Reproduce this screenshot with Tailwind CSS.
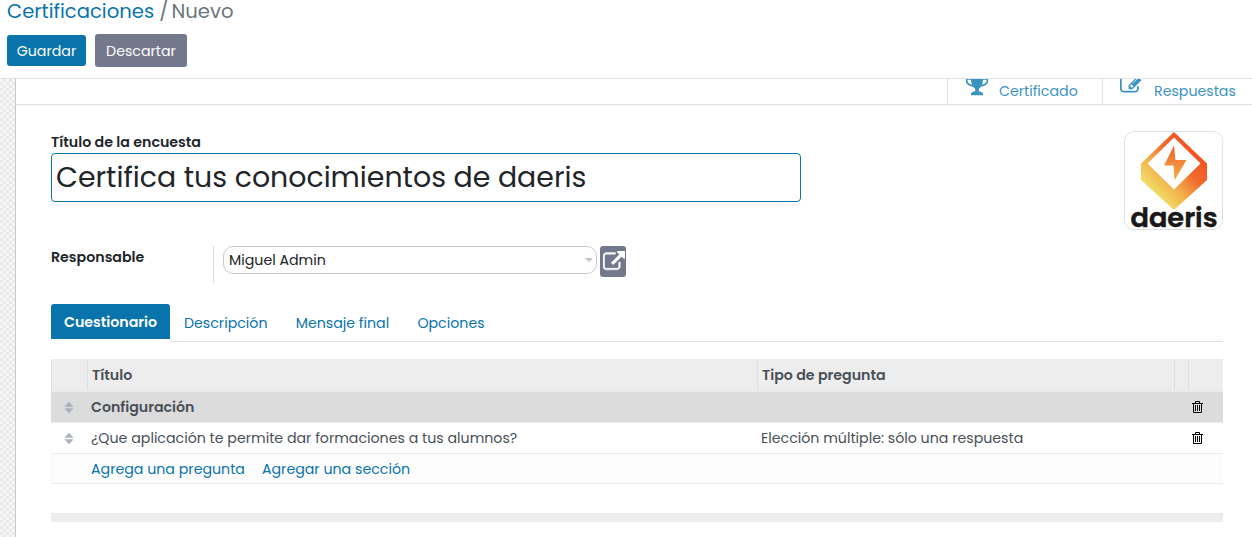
<!DOCTYPE html>
<html lang="es">
<head>
<meta charset="utf-8">
<title>Certificaciones / Nuevo</title>
<script src="https://cdn.jsdelivr.net/npm/@tailwindcss/browser@4"></script>
</head>
<body class="flex h-[537px] w-[1252px] flex-col overflow-hidden bg-white font-[Poppins,Inter,sans-serif] text-[14.2px] leading-[21px] text-[#212529]">

<header class="h-[79px] shrink-0 border-b border-[#dee2e6] pl-[7px]">
  <nav class="flex h-[26px] gap-[5px] text-[19.6px] leading-[22px] text-[#6c757d]">
    <a class="text-[#0874ab]">Certificaciones</a><span>/</span><span class="-ml-[2px]">Nuevo</span>
  </nav>
  <div class="mt-[8px] flex items-center gap-[9px] text-white">
    <button class="h-[31px] w-[79px] rounded-[3px] bg-[#0874ab] pt-[2px]">Guardar</button>
    <button class="h-[33px] w-[92px] rounded-[3px] bg-[#74788d] pt-[2px]">Descartar</button>
  </div>
</header>

<div class="flex min-h-0 flex-1">
  <div class="w-[15px] shrink-0 bg-[repeating-conic-gradient(#e9e9e9_0_25%,#f6f6f6_0_50%)] bg-[length:6px_6px]"></div>

  <main class="flex min-w-0 flex-1 flex-col border-l border-[#c8c8d3]">
    <div class="flex h-[26px] shrink-0 justify-end overflow-hidden border-b border-[#dee2e6] text-[#3b93bf]">
      <div class="flex w-[155px] items-end border-l border-[#dee2e6] pl-[17px]">
        <svg class="mb-[7px] size-6 shrink-0" viewBox="0 0 1792 1792" fill="currentColor"><path d="M522 883q-74-162-74-371h-256v96q0 78 94.5 162t235.5 113zm1078-275v-96h-256q0 209-74 371 141-29 235.5-113t94.5-162zm128-128v128q0 71-41.5 143t-112 130-173 97.5-215.5 44.500q-42 54-95 95-38 34-52.500 72.500t-14.500 89.500q0 54 30.500 91t97.500 37q75 0 133.500 45.500t58.500 114.500v64q0 14-9 23t-23 9h-832q-14 0-23-9t-9-23v-64q0-69 58.500-114.500t133.500-45.500q67 0 97.500-37t30.500-91q0-51-14.500-89.500t-52.500-72.500q-53-41-95-95-113-5-215.500-44.500t-173-97.500-112-130-41.500-143v-128q0-40 28-68t68-28h288v-96q0-66 47-113t113-47h576q66 0 113 47t47 113v96h288q40 0 68 28t28 68z"/></svg>
        <span class="ml-[10px] mb-[2px]">Certificado</span>
      </div>
      <div class="flex w-[150px] items-end border-l border-[#dee2e6] pl-[17px]">
        <svg class="mb-[8px] size-6 shrink-0" viewBox="0 0 1792 1792" fill="currentColor"><path d="M888 1184l116-116-152-152-116 116v56h96v96h56zm440-720q-16-16-33 1l-350 350q-17 17-1 33t33-1l350-350q17-17 1-33zm80 594v190q0 119-84.500 203.500t-203.500 84.500h-832q-119 0-203.500-84.500t-84.500-203.500v-832q0-119 84.500-203.500t203.500-84.500h832q63 0 117 25 15 7 18 23 3 17-9 29l-49 49q-14 14-32 8-23-6-45-6h-832q-66 0-113 47t-47 113v832q0 66 47 113t113 47h832q66 0 113-47t47-113v-126q0-13 9-22l64-64q15-15 35-7t20 29zm-96-738l288 288-672 672h-288v-288zm444 132l-92 92-288-288 92-92q28-28 68-28t68 28l152 152q28 28 28 68t-28 68z"/></svg>
        <span class="ml-[10px] mb-[2px]">Respuestas</span>
      </div>
    </div>

    <div class="flex flex-1 flex-col pl-[35px] pr-[29px] pt-[26px]">
      <div class="flex h-[99px] justify-between">
        <div class="w-[750px]">
          <label class="block h-[22px] leading-[22px] font-semibold">Título de la encuesta</label>
          <div class="h-[49px] rounded-[4px] border border-[#0874ab] pl-[4px] text-[28.4px] leading-[47px]">Certifica tus conocimientos de daeris</div>
        </div>
        <svg class="h-[99px] w-[99px] overflow-visible" viewBox="0 0 99 99">
          <defs>
            <linearGradient id="flame" gradientUnits="userSpaceOnUse" x1="76" y1="22" x2="32" y2="64">
              <stop offset="0" stop-color="#f4511e"/><stop offset="0.35" stop-color="#f06a2c"/><stop offset="0.7" stop-color="#f3b24c"/><stop offset="1" stop-color="#f0dd66"/>
            </linearGradient>
            <linearGradient id="bolt" x1="0.5" y1="0" x2="0.5" y2="1">
              <stop offset="0" stop-color="#f0602a"/><stop offset="1" stop-color="#f2b14a"/>
            </linearGradient>
          </defs>
          <rect x="0.5" y="0.5" width="98" height="98" rx="9.500" fill="#fff" stroke="#dee2e6"/>
          <path d="M50 1L83 32.500V49L50 79L17 49V32.500Z" fill="url(#flame)"/>
          <path d="M50 7.500L75.500 32.500L50 57.500L24.500 32.500Z" fill="#fff" stroke="#fff" stroke-width="1.500" stroke-linejoin="round"/>
          <path d="M50 14.500L40 34.500H49.500L50.500 49.500L62.500 29H51.500Z" fill="url(#bolt)"/>
          <text x="6.500" y="95.500" font-family="Poppins, Inter, sans-serif" font-weight="600" font-size="27" textLength="87" lengthAdjust="spacingAndGlyphs" fill="#181818" stroke="#181818" stroke-width="0.500" stroke-linejoin="round">daeris</text>
        </svg>
      </div>

      <div class="mt-[16px] flex h-[37px]">
        <label class="w-[162px] pt-px font-semibold">Responsable</label>
        <div class="flex border-l border-[#dcdcdc] pl-[9px]">
          <div class="flex h-[28px] w-[374px] items-center justify-between rounded-[10px] border border-[#cbcbcb] pl-[5px] pr-[3px]">
            <span>Miguel Admin</span>
            <svg class="h-[4px] w-[8px]" viewBox="0 0 8 4" fill="#c4c4c4"><path d="M0 0H8L4 4Z"/></svg>
          </div>
          <button class="ml-[3px] flex h-[31px] w-[26px] items-center justify-center rounded-[3px] bg-[#74788d] pl-[2px] text-white">
            <svg class="mt-px size-[22px] shrink-0" viewBox="0 0 1792 1792" fill="currentColor" stroke="currentColor" stroke-width="40"><path d="M1408 928v320q0 119-84.500 203.500t-203.500 84.500h-832q-119 0-203.500-84.500t-84.500-203.500v-832q0-119 84.500-203.500t203.500-84.500h704q14 0 23 9t9 23v64q0 14-9 23t-23 9h-704q-66 0-113 47t-47 113v832q0 66 47 113t113 47h832q66 0 113-47t47-113v-320q0-14 9-23t23-9h64q14 0 23 9t9 23zm384-864v512q0 26-19 45t-45 19-45-19l-176-176-652 652q-10 10-23 10t-23-10l-114-114q-10-10-10-23t10-23l652-652-176-176q-19-19-19-45t19-45 45-19h512q26 0 45 19t19 45z"/></svg>
          </button>
        </div>
      </div>

      <div class="mt-[21px] flex h-[38px] text-[#0874ab]">
        <div class="h-[35px] w-[119px] rounded-t-[3px] bg-[#0874ab] pl-[13px] pt-[8px] font-semibold text-white">Cuestionario</div>
        <div class="flex flex-1 gap-[28.2px] border-b border-[#dee2e6] pl-[14px] pt-[9px]">
          <span>Descripción</span><span>Mensaje final</span><span>Opciones</span>
        </div>
      </div>

      <div class="mt-[17px] text-[#495057]">
        <div class="flex h-[33px] flex-col border-b-2 border-b-[#e9ecef] border-t border-t-[#e9ecef] bg-[#ededed] font-semibold">
          <div class="flex flex-1 leading-[30px]">
            <div class="w-[36px] border-l border-[#dcdee0]"></div>
            <div class="w-[670px] border-l border-[#dcdee0] pl-[4px]">Título</div>
            <div class="w-[417px] border-l border-[#dcdee0] pl-[4px]">Tipo de pregunta</div>
            <div class="w-[14px] border-l border-[#dcdee0]"></div>
            <div class="w-[35px] border-l border-[#dcdee0]"></div>
          </div>
        </div>
        <div class="flex h-[31px] items-center border-b border-[#e9ecef] bg-[#dcdcdc] font-semibold">
          <svg class="ml-[14px] h-[11px] w-[8px] overflow-visible" viewBox="0 0 8 11" fill="#a9b1bd"><path d="M0 4.500L4 0L8 4.500ZM0 6.500H8L4 11Z" stroke="#a9b1bd" stroke-width="0.500"/></svg>
          <span class="ml-[18px] flex-1">Configuración</span>
          <svg class="mr-[20px] h-[12px] w-[11px]" viewBox="0 0 11 12" fill="none" stroke="#000"><path d="M0 2.500H11M3.500 2V0.500H7.500V2M1.500 3V11.500H9.500V3M3.500 4V10M5.500 4V10M7.500 4V10"/></svg>
        </div>
        <div class="flex h-[31px] items-center border-b border-[#e9ecef]">
          <svg class="ml-[14px] h-[11px] w-[8px] overflow-visible" viewBox="0 0 8 11" fill="#a9b1bd"><path d="M0 4.500L4 0L8 4.500ZM0 6.500H8L4 11Z" stroke="#a9b1bd" stroke-width="0.500"/></svg>
          <span class="ml-[18px] w-[670px]">¿Que aplicación te permite dar formaciones a tus alumnos?</span>
          <span class="flex-1">Elección múltiple: sólo una respuesta</span>
          <svg class="mr-[20px] h-[12px] w-[11px]" viewBox="0 0 11 12" fill="none" stroke="#000"><path d="M0 2.500H11M3.500 2V0.500H7.500V2M1.500 3V11.500H9.500V3M3.500 4V10M5.500 4V10M7.500 4V10"/></svg>
        </div>
        <div class="flex h-[30px] items-center gap-[17px] border-b border-[#e9ecef] bg-[#fcfcfc] pl-[40px] pt-[2px] text-[#0874ab]">
          <a>Agrega una pregunta</a><a>Agregar una sección</a>
        </div>
        <div class="mt-[29px] h-[9px] border-t border-[#e9ecef] bg-[#ededed]"></div>
      </div>
    </div>
  </main>
</div>
</body>
</html>
